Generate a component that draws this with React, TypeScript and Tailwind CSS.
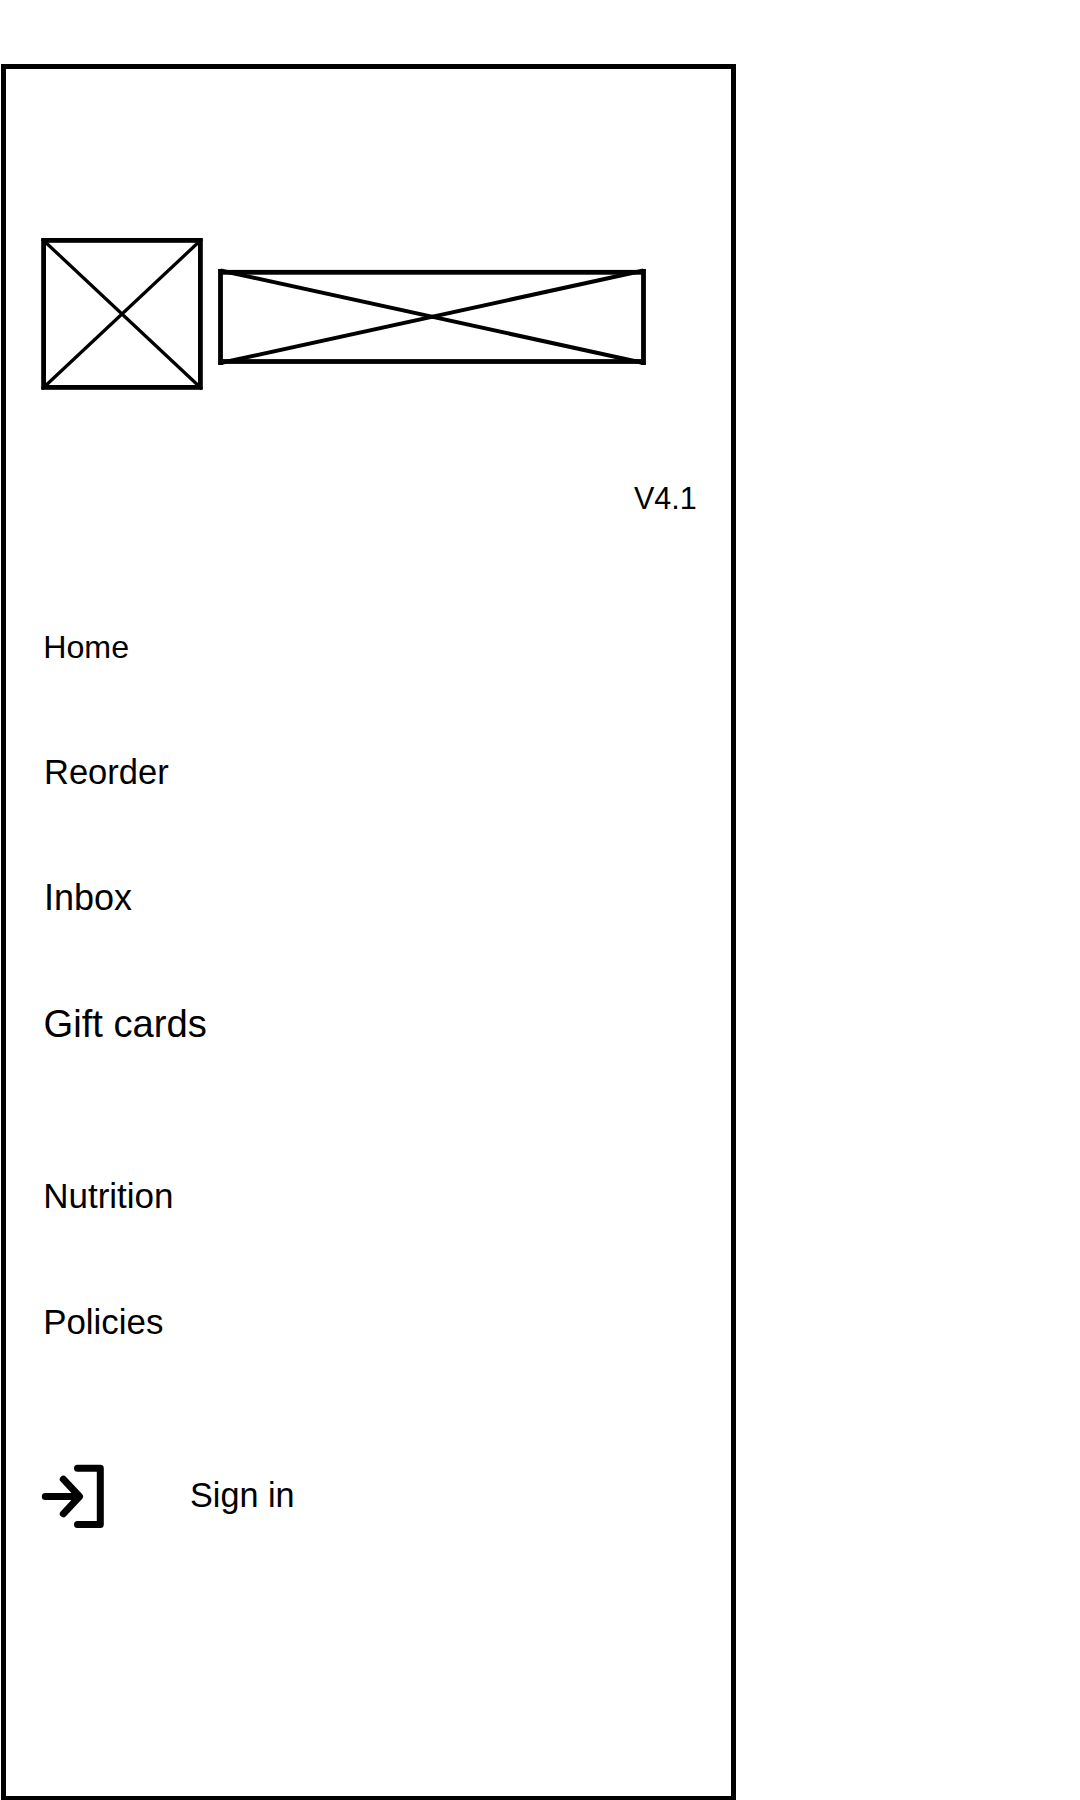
const menu = [
  { label: 'Home', style: 'mt-[109px] pl-[43.2px] text-[32.2px]' },
  { label: 'Reorder', style: 'mt-[85px] pl-[44px] text-[34.5px]' },
  { label: 'Inbox', style: 'mt-[86px] pl-[44px] text-[36px]' },
  { label: 'Gift cards', style: 'mt-[86px] pl-[43.5px] text-[38.2px]' },
  { label: 'Nutrition', style: 'mt-[132px] pl-[43.2px] text-[35px]' },
  { label: 'Policies', style: 'mt-[86px] pl-[43.2px] text-[34.9px]' },
];

function LogoPlaceholder() {
  return (
    <svg className="block h-[156px] w-[165px] shrink-0" viewBox="40 236 165 156" fill="none" stroke="#000">
      <rect x="43.6" y="240.4" width="156.8" height="147" strokeWidth="4.8" />
      <path d="M42 239 202 389M202 239 42 389" strokeWidth="3.3" />
    </svg>
  );
}

function BannerPlaceholder() {
  return (
    <svg className="block h-[100px] w-[430px] shrink-0" viewBox="217 267 430 100" fill="none" stroke="#000">
      <rect x="220.5" y="272.3" width="423" height="89.2" strokeWidth="4.8" />
      <path d="M220.5 270.5 643.5 363M643.5 270.5 220.5 363" strokeWidth="4" />
      <path d="M218.1 270h5M640.9 270h5M218.1 364h5M640.9 364h5" strokeWidth="2" />
    </svg>
  );
}

function SignInIcon() {
  return (
    <svg className="block h-[68px] w-[66px] shrink-0" viewBox="40 1462 66 68" fill="none" stroke="#000" strokeLinecap="round" strokeLinejoin="round">
      <path d="M45.3 1496.5H79M63.3 1479.2 79.5 1496.5 63.3 1513.8" strokeWidth="7" />
      <path d="M77.5 1468.3H100.3V1524.4H77.5" strokeWidth="7" />
    </svg>
  );
}

export default function App() {
  return (
    <div className="h-[1800px] w-[1080px] overflow-hidden bg-white pt-16 pl-px font-['Liberation_Sans',Arial,sans-serif] text-black">
      <main className="h-[1736px] w-[735px] border-[5px] border-b-4 border-black">
        <div className="-ml-1.5 flex flex-col">
          <header className="mt-[167px] flex h-[156px] items-center gap-3 pl-10">
            <LogoPlaceholder />
            <div className="pt-1.5">
              <BannerPlaceholder />
            </div>
          </header>
          <div className="mt-[86px] pl-[634px] text-[30.5px] leading-10">V4.1</div>
          <nav>
            {menu.map(({ label, style }) => (
              <div key={label} className={`leading-10 whitespace-nowrap ${style}`}>{label}</div>
            ))}
          </nav>
          <div className="mt-[120px] flex h-[68px] pl-10">
            <SignInIcon />
            <span className="mt-[13px] ml-[84px] text-[34.2px] leading-10">Sign in</span>
          </div>
        </div>
      </main>
    </div>
  );
}
